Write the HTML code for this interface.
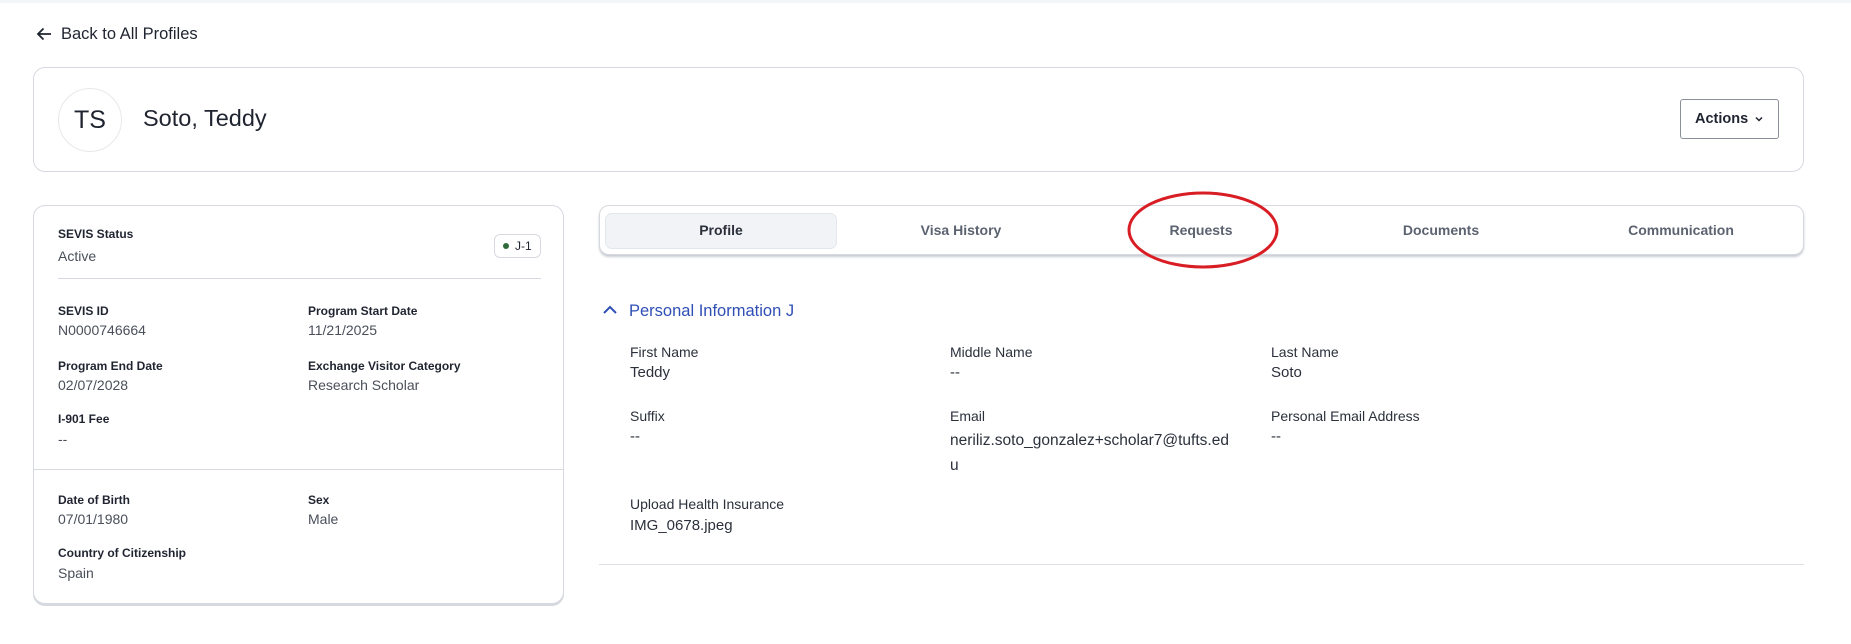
<!DOCTYPE html>
<html><head><meta charset="utf-8"><style>
*{box-sizing:border-box;margin:0;padding:0}
body{width:1851px;height:644px;background:#fff;font-family:"Liberation Sans",sans-serif;color:#1f2430;position:relative;overflow:hidden}
.a{position:absolute;white-space:nowrap}
.card{position:absolute;border:1px solid #d6d9df;border-radius:12px;background:#fff}
.lab{position:absolute;font-size:12px;font-weight:bold;color:#1f2430;white-space:nowrap}
.val{position:absolute;font-size:14px;color:#4a4f5a;white-space:nowrap}
.fl{position:absolute;font-size:14px;color:#2b303b;white-space:nowrap}
.fv{position:absolute;font-size:15px;color:#2b303b;white-space:nowrap}
.tab{position:absolute;top:222px;font-size:14px;font-weight:bold;color:#5b6270;width:240px;text-align:center}
</style></head><body>
<div style="position:absolute;left:0;top:0;width:1851px;height:3px;background:#f4f5f7"></div>
<svg class="a" style="left:35px;top:25px" width="18" height="18" viewBox="0 0 18 18"><path d="M16 9H3M8.5 3.5L3 9l5.5 5.5" fill="none" stroke="#1f2430" stroke-width="1.8"/></svg>
<div class="a" style="left:61px;top:25px;font-size:16.5px;color:#1f2430">Back to All Profiles</div>

<div class="card" style="left:33px;top:67px;width:1771px;height:105px"></div>
<div class="a" style="left:58px;top:88px;width:64px;height:64px;border:1px solid #e6e8ec;border-radius:50%;font-size:25px;line-height:62px;text-align:center">TS</div>
<div class="a" style="left:143px;top:105px;font-size:23.5px">Soto, Teddy</div>
<div class="a" style="left:1680px;top:99px;width:99px;height:40px;border:1px solid #8a8f99;border-radius:3px;font-size:14.5px;font-weight:bold;line-height:38px;padding-left:14px">Actions <svg width="10" height="8" viewBox="0 0 10 8" style="margin-left:2px"><path d="M2 2.5l3 3 3-3" fill="none" stroke="#1f2430" stroke-width="1.5"/></svg></div>

<div class="card" style="left:33px;top:205px;width:531px;height:399px;box-shadow:0 2px 0 #d6d9df"></div>
<div class="lab" style="left:58px;top:227px">SEVIS Status</div>
<div class="val" style="left:58px;top:248px">Active</div>
<div class="a" style="left:494px;top:234px;width:47px;height:24px;border:1px solid #d6d9df;border-radius:6px;font-size:12px;line-height:22px;padding-left:8px"><span style="display:inline-block;width:6px;height:6px;border-radius:50%;background:#2f6b3a;margin-right:6px;vertical-align:1px"></span>J-1</div>
<div class="a" style="left:58px;top:278px;width:483px;height:1px;background:#d6d9df"></div>
<div class="lab" style="left:58px;top:304px">SEVIS ID</div><div class="val" style="left:58px;top:322px">N0000746664</div>
<div class="lab" style="left:308px;top:304px">Program Start Date</div><div class="val" style="left:308px;top:322px">11/21/2025</div>
<div class="lab" style="left:58px;top:359px">Program End Date</div><div class="val" style="left:58px;top:377px">02/07/2028</div>
<div class="lab" style="left:308px;top:359px">Exchange Visitor Category</div><div class="val" style="left:308px;top:377px">Research Scholar</div>
<div class="lab" style="left:58px;top:412px">I-901 Fee</div><div class="val" style="left:58px;top:431px">--</div>
<div class="a" style="left:34px;top:469px;width:529px;height:1px;background:#d6d9df"></div>
<div class="lab" style="left:58px;top:493px">Date of Birth</div><div class="val" style="left:58px;top:511px">07/01/1980</div>
<div class="lab" style="left:308px;top:493px">Sex</div><div class="val" style="left:308px;top:511px">Male</div>
<div class="lab" style="left:58px;top:546px">Country of Citizenship</div><div class="val" style="left:58px;top:565px">Spain</div>

<div class="card" style="left:599px;top:205px;width:1205px;height:50px;border-radius:10px;box-shadow:0 2px 2px #c9ccd3"></div>
<div class="a" style="left:605px;top:213px;width:232px;height:36px;background:#f1f3f7;border:1px solid #e3e6ec;border-radius:7px"></div>
<div class="tab" style="left:601px;color:#2b303b">Profile</div>
<div class="tab" style="left:841px">Visa History</div>
<div class="tab" style="left:1081px">Requests</div>
<div class="tab" style="left:1321px">Documents</div>
<div class="tab" style="left:1561px">Communication</div>
<svg class="a" style="left:1123px;top:188px" width="160" height="84"><ellipse cx="80" cy="42" rx="74" ry="37" fill="none" stroke="#d81e24" stroke-width="3"/></svg>

<svg class="a" style="left:602px;top:303px" width="16" height="14"><path d="M2 10l6-6 6 6" fill="none" stroke="#2f4fb5" stroke-width="2"/></svg>
<div class="a" style="left:629px;top:302px;font-size:16.5px;color:#2f4fb5">Personal Information J</div>
<div class="fl" style="left:630px;top:344px">First Name</div><div class="fv" style="left:630px;top:364px">Teddy</div>
<div class="fl" style="left:950px;top:344px">Middle Name</div><div class="fv" style="left:950px;top:364px">--</div>
<div class="fl" style="left:1271px;top:344px">Last Name</div><div class="fv" style="left:1271px;top:364px">Soto</div>
<div class="fl" style="left:630px;top:408px">Suffix</div><div class="fv" style="left:630px;top:428px">--</div>
<div class="fl" style="left:950px;top:408px">Email</div><div class="fv" style="left:950px;top:428px;line-height:25px;font-size:15.5px">neriliz.soto_gonzalez+scholar7@tufts.ed<br>u</div>
<div class="fl" style="left:1271px;top:408px">Personal Email Address</div><div class="fv" style="left:1271px;top:428px">--</div>
<div class="fl" style="left:630px;top:496px">Upload Health Insurance</div><div class="fv" style="left:630px;top:517px">IMG_0678.jpeg</div>
<div class="a" style="left:599px;top:564px;width:1205px;height:1px;background:#dcdfe4"></div>
</body></html>
